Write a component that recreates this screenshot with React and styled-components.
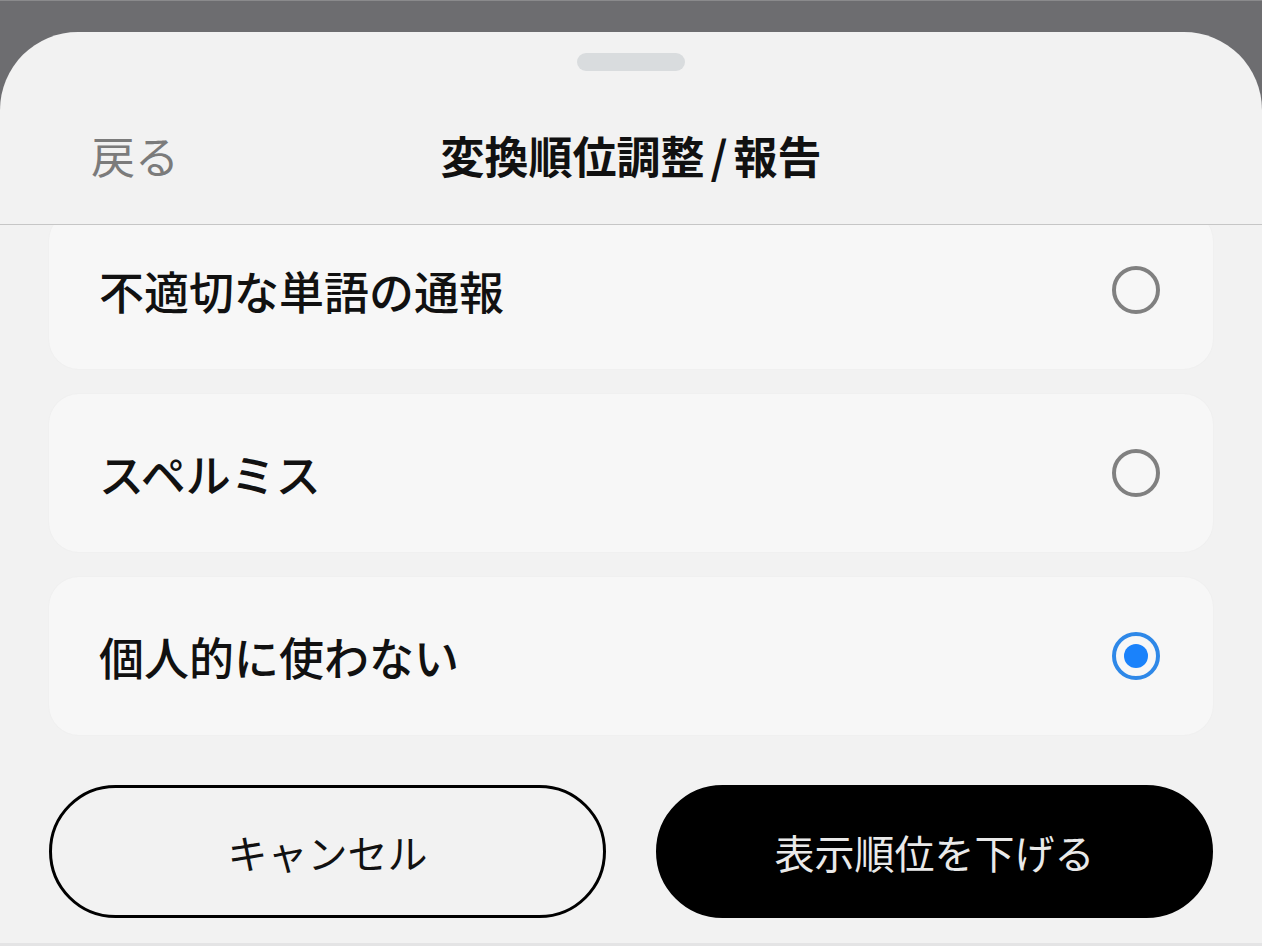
import React, { useState } from 'react';
import styled, { createGlobalStyle } from 'styled-components';

const GlobalStyle = createGlobalStyle`
  html, body {
    margin: 0;
    padding: 0;
    background: #6d6d70;
    font-family: "Noto Sans CJK JP", "Noto Sans", sans-serif;
  }
  * { box-sizing: border-box; }
`;

const options = [
  { id: 'report', label: '不適切な単語の通報' },
  { id: 'spell', label: 'スペルミス' },
  { id: 'personal', label: '個人的に使わない' },
];

const App = () => {
  const [selected, setSelected] = useState('personal');

  return (
    <>
      <GlobalStyle />
      <Backdrop>
        <Sheet>
          <HandleRow>
            <Handle />
          </HandleRow>
          <HeaderBar>
            <BackButton>戻る</BackButton>
            <Title>変換順位調整 / 報告</Title>
          </HeaderBar>
          <ScrollArea>
            <OptionList>
              {options.map(opt => (
                <OptionCard key={opt.id} onClick={() => setSelected(opt.id)}>
                  <OptionLabel>{opt.label}</OptionLabel>
                  <Radio checked={selected === opt.id} />
                </OptionCard>
              ))}
            </OptionList>
          </ScrollArea>
          <Footer>
            <CancelButton>キャンセル</CancelButton>
            <PrimaryButton>表示順位を下げる</PrimaryButton>
          </Footer>
        </Sheet>
      </Backdrop>
    </>
  );
};

export default App;

const Backdrop = styled.div`
  height: 946px;
  padding-top: 31px;
  border-top: 1px solid #8a8a8c;
  overflow: hidden;
`
const Sheet = styled.div`
  height: 915px;
  background: #f2f2f2;
  border-radius: 78px 78px 0 0;
  display: flex;
  flex-direction: column;
  border-bottom: 4px solid #e4e4e5;
`
const HandleRow = styled.div`
  display: flex;
  justify-content: center;
  padding-top: 21px;
`
const Handle = styled.div`
  width: 108px;
  height: 18px;
  border-radius: 9px;
  background: #d9dcde;
`
const HeaderBar = styled.div`
  position: relative;
  height: 154px;
  display: flex;
  justify-content: center;
  align-items: center;
  padding-top: 14px;
  border-bottom: 1px solid #c6c6c6;
`
const BackButton = styled.span`
  position: absolute;
  left: 91px;
  top: 56px;
  font-size: 44px;
  line-height: 56px;
  color: #7b7b7b;
  font-weight: 400;
`
const Title = styled.h1`
  margin: 0;
  font-size: 44px;
  line-height: 56px;
  font-weight: 700;
  color: #111111;
  word-spacing: -4px;
`
const ScrollArea = styled.div`
  height: 535px;
  overflow: hidden;
  padding: 0 49px;
`
const OptionList = styled.div`
  display: flex;
  flex-direction: column;
  gap: 25px;
  margin-top: -14px;
`
const OptionCard = styled.div`
  height: 158px;
  border-radius: 30px;
  background: #f7f7f7;
  box-shadow: 0 0 2px rgba(0, 0, 0, 0.04);
  display: flex;
  align-items: center;
  justify-content: space-between;
  padding: 0 53px 0 50px;
  cursor: pointer;
`
const OptionLabel = styled.span`
  font-size: 45px;
  font-weight: 500;
  color: #111111;
  line-height: 1;
`
const Radio = styled.span`
  width: 48px;
  height: 48px;
  border-radius: 50%;
  border: 4px solid ${props => props.checked ? '#2e88e8' : '#808080'};
  display: flex;
  align-items: center;
  justify-content: center;
  &::after {
    content: '';
    display: ${props => props.checked ? 'block' : 'none'};
    width: 24px;
    height: 24px;
    border-radius: 50%;
    background: #1a82fb;
  }
`
const Footer = styled.div`
  display: grid;
  grid-template-columns: 1fr 1fr;
  gap: 50px;
  padding: 25px 49px 0;
`
const BaseButton = styled.button`
  height: 133px;
  border-radius: 67px;
  font-family: "Noto Sans CJK JP", "Noto Sans", sans-serif;
  font-size: 40px;
  font-weight: 400;
  cursor: pointer;
`
const CancelButton = styled(BaseButton)`
  background: #f2f2f2;
  border: 3px solid #000000;
  color: #111111;
`
const PrimaryButton = styled(BaseButton)`
  background: #000000;
  border: 3px solid #000000;
  color: #e9e9e9;
`
